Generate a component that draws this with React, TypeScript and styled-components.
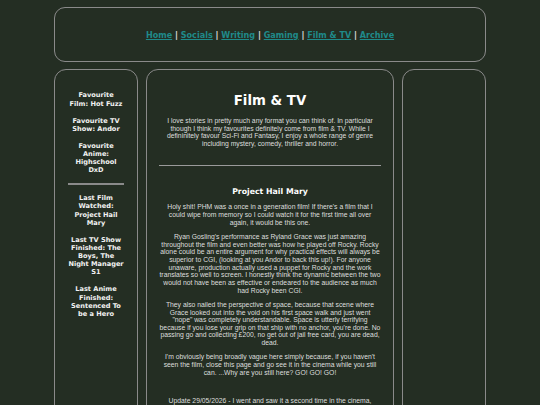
import React from "react";
import styled, { createGlobalStyle } from "styled-components";

const GlobalStyle = createGlobalStyle`
  html, body {
    margin: 0;
    padding: 0;
    background: #242e23;
  }
  body {
    font-family: "Liberation Sans", Arial, sans-serif;
    color: #dcdcdc;
  }
`;

const Page = styled.div`
  width: 432px;
  margin: 0 auto;
  padding-top: 7px;
  display: flex;
  flex-direction: column;
  gap: 7px;
`;

const Header = styled.header`
  height: 55px;
  box-sizing: border-box;
  border: 1.5px solid #8a8a8a;
  border-radius: 11px;
  display: flex;
  align-items: center;
  justify-content: center;
  font-family: "DejaVu Sans", Verdana, sans-serif;
  font-weight: bold;
  font-size: 8.1px;
  color: #e0e0e0;
`;

const NavLink = styled.a`
  color: #1f8a8a;
  text-decoration: underline;
`;

const Sep = styled.span`
  white-space: pre;
`;

const Columns = styled.div`
  display: flex;
  gap: 8px;
  align-items: stretch;
`;

const Panel = styled.div<{ $width: number; $pad: number }>`
  width: ${(p) => p.$width}px;
  flex: none;
  box-sizing: border-box;
  border: 1.5px solid #8a8a8a;
  border-radius: 12px;
  padding: 12.5px ${(p) => p.$pad}px;
  text-align: center;
  min-height: 400px;
`;

const SideItem = styled.h4`
  font-family: "DejaVu Sans", Verdana, sans-serif;
  font-weight: bold;
  font-size: 6.6px;
  line-height: 8.15px;
  color: #f2f2f2;
  margin: 8.9px 0;
`;

const SideRule = styled.hr`
  border: none;
  height: 2px;
  background: #8a8a8a;
  margin: 8.5px 0 7.5px;
`;

const Title = styled.h1`
  font-family: "DejaVu Sans", Verdana, sans-serif;
  font-weight: bold;
  font-size: 13.33px;
  color: #ffffff;
  margin: 10px 0 9.5px;
`;

const SubTitle = styled.h3`
  font-family: "DejaVu Sans", Verdana, sans-serif;
  font-weight: bold;
  font-size: 7.8px;
  color: #ffffff;
  margin: 0 0 7.7px;
`;

const Text = styled.p<{ $gap?: number }>`
  font-size: 6.8px;
  line-height: 7.65px;
  margin: ${(p) => p.$gap ?? 6.67}px 0 6.67px;
  color: #dedede;
`;

const MainRule = styled.hr`
  border: none;
  height: 1.5px;
  background: #9a9a9a;
  margin: 17px 0 20.5px;
`;

const links = ["Home", "Socials", "Writing", "Gaming", "Film & TV", "Archive"];

export default function App() {
  return (
    <>
      <GlobalStyle />
      <Page>
        <Header>
          {links.map((l, i) => (
            <React.Fragment key={l}>
              {i > 0 && <Sep> | </Sep>}
              <NavLink href="#">{l}</NavLink>
            </React.Fragment>
          ))}
        </Header>
        <Columns>
          <Panel $width={84} $pad={13}>
            <SideItem>Favourite Film: Hot Fuzz</SideItem>
            <SideItem>Favourite TV Show: Andor</SideItem>
            <SideItem>Favourite Anime: Highschool DxD</SideItem>
            <SideRule />
            <SideItem>Last Film Watched: Project Hail Mary</SideItem>
            <SideItem>Last TV Show Finished: The Boys, The Night Manager S1</SideItem>
            <SideItem>Last Anime Finished: Sentenced To be a Hero</SideItem>
          </Panel>
          <Panel $width={248} $pad={12.25}>
            <Title>Film &amp; TV</Title>
            <Text $gap={0}>
              I love stories in pretty much any format you can think of. In particular
              though I think my favourites definitely come from film &amp; TV. While I
              defininitely favour Sci-Fi and Fantasy, I enjoy a whole range of genre
              including mystery, comedy, thriller and horror.
            </Text>
            <MainRule />
            <SubTitle>Project Hail Mary</SubTitle>
            <Text $gap={0}>
              Holy shit! PHM was a once in a generation film! If there's a film that I
              could wipe from memory so I could watch it for the first time all over
              again, it would be this one.
            </Text>
            <Text>
              Ryan Gosling's performance as Ryland Grace was just amazing throughout the
              film and even better was how he played off Rocky. Rocky alone could be an
              entire argument for why practical effects will always be superior to CGI,
              (looking at you Andor to back this up!). For anyone unaware, production
              actually used a puppet for Rocky and the work translates so well to screen.
              I honestly think the dynamic between the two would not have been as
              effective or endeared to the audience as much had Rocky been CGI.
            </Text>
            <Text>
              They also nailed the perspective of space, because that scene where Grace
              looked out into the void on his first space walk and just went "nope" was
              completely understandable. Space is utterly terrifying because if you lose
              your grip on that ship with no anchor, you're done. No passing go and
              collecting £200, no get out of jail free card, you are dead, dead.
            </Text>
            <Text>
              I'm obviously being broadly vague here simply because, if you haven't seen
              the film, close this page and go see it in the cinema while you still can.
              ...Why are you still here? GO! GO! GO!
            </Text>
            <Text $gap={20.5}>
              Update 29/05/2026 - I went and saw it a second time in the cinema,
            </Text>
          </Panel>
          <Panel $width={84} $pad={13} />
        </Columns>
      </Page>
    </>
  );
}
